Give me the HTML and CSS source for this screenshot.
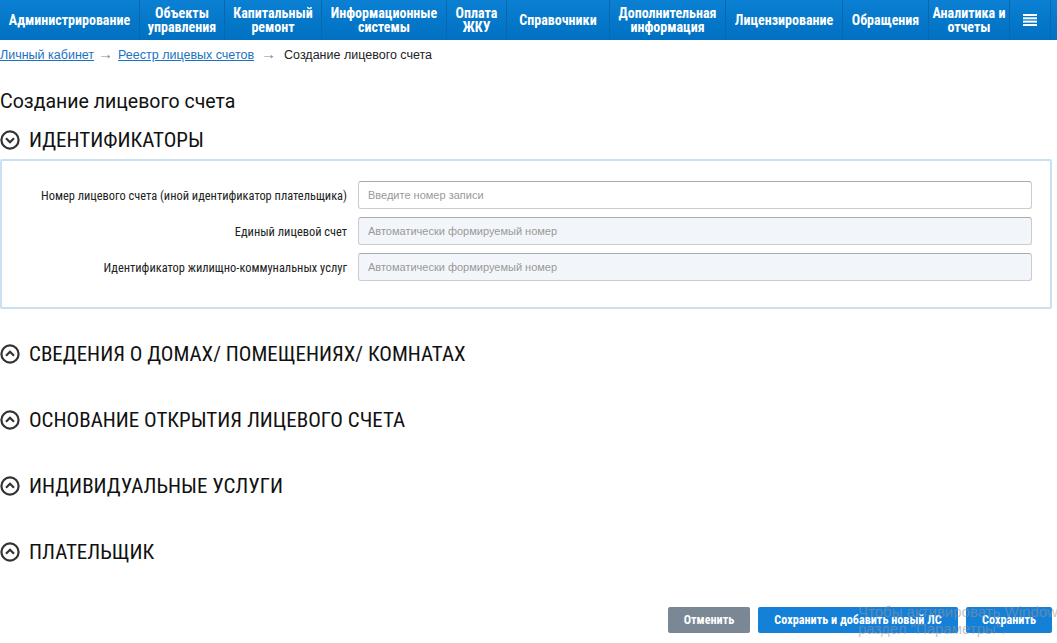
FILE: index.html
```html
<!DOCTYPE html>
<html lang="ru">
<head>
<meta charset="utf-8">
<title>Создание лицевого счета</title>
<link rel="stylesheet" href="styles.css">
</head>
<body>
<nav class="nav">
  <a class="nav-item w1">Администрирование</a>
  <a class="nav-item w2">Объекты<br>управления</a>
  <a class="nav-item w3">Капитальный<br>ремонт</a>
  <a class="nav-item w4">Информационные<br>системы</a>
  <a class="nav-item w5">Оплата<br>ЖКУ</a>
  <a class="nav-item w6">Справочники</a>
  <a class="nav-item w7">Дополнительная<br>информация</a>
  <a class="nav-item w8">Лицензирование</a>
  <a class="nav-item w9">Обращения</a>
  <a class="nav-item w10">Аналитика и<br>отчеты</a>
  <a class="nav-item nav-menu"><svg width="14" height="12" viewBox="0 0 14 12"><rect y="0" width="14" height="2" fill="#fff"/><rect y="3.3" width="14" height="2" fill="#fff"/><rect y="6.6" width="14" height="2" fill="#fff"/><rect y="10" width="14" height="2" fill="#fff"/></svg></a>
  <span class="nav-rest"></span>
</nav>

<div class="crumbs">
  <a class="crumb-link">Личный кабинет</a><span class="arrow">→</span><a class="crumb-link">Реестр лицевых счетов</a><span class="arrow arrow-last">→</span><span class="crumb-current">Создание лицевого счета</span>
</div>

<h1 class="title">Создание лицевого счета</h1>

<section class="section open">
  <h2 class="sec-head"><svg class="sec-icon" width="20" height="20" viewBox="0 0 20 20"><circle cx="10" cy="10" r="8.6" fill="none" stroke="#333" stroke-width="2.2"/><path d="M6 8.3 L10 12.2 L14 8.3" fill="none" stroke="#333" stroke-width="2.2"/></svg>ИДЕНТИФИКАТОРЫ</h2>
  <div class="box">
    <div class="row">
      <label class="label">Номер лицевого счета (иной идентификатор плательщика)</label>
      <input class="field" type="text" placeholder="Введите номер записи">
    </div>
    <div class="row">
      <label class="label">Единый лицевой счет</label>
      <input class="field ro" type="text" placeholder="Автоматически формируемый номер" readonly>
    </div>
    <div class="row">
      <label class="label">Идентификатор жилищно-коммунальных услуг</label>
      <input class="field ro" type="text" placeholder="Автоматически формируемый номер" readonly>
    </div>
  </div>
</section>

<section class="section">
  <h2 class="sec-head"><svg class="sec-icon" width="20" height="20" viewBox="0 0 20 20"><circle cx="10" cy="10" r="8.6" fill="none" stroke="#333" stroke-width="2.2"/><path d="M6 11.7 L10 7.8 L14 11.7" fill="none" stroke="#333" stroke-width="2.2"/></svg>СВЕДЕНИЯ О ДОМАХ/ ПОМЕЩЕНИЯХ/ КОМНАТАХ</h2>
</section>
<section class="section">
  <h2 class="sec-head"><svg class="sec-icon" width="20" height="20" viewBox="0 0 20 20"><circle cx="10" cy="10" r="8.6" fill="none" stroke="#333" stroke-width="2.2"/><path d="M6 11.7 L10 7.8 L14 11.7" fill="none" stroke="#333" stroke-width="2.2"/></svg>ОСНОВАНИЕ ОТКРЫТИЯ ЛИЦЕВОГО СЧЕТА</h2>
</section>
<section class="section">
  <h2 class="sec-head"><svg class="sec-icon" width="20" height="20" viewBox="0 0 20 20"><circle cx="10" cy="10" r="8.6" fill="none" stroke="#333" stroke-width="2.2"/><path d="M6 11.7 L10 7.8 L14 11.7" fill="none" stroke="#333" stroke-width="2.2"/></svg>ИНДИВИДУАЛЬНЫЕ УСЛУГИ</h2>
</section>
<section class="section">
  <h2 class="sec-head"><svg class="sec-icon" width="20" height="20" viewBox="0 0 20 20"><circle cx="10" cy="10" r="8.6" fill="none" stroke="#333" stroke-width="2.2"/><path d="M6 11.7 L10 7.8 L14 11.7" fill="none" stroke="#333" stroke-width="2.2"/></svg>ПЛАТЕЛЬЩИК</h2>
</section>

<div class="actions">
  <button class="btn btn-grey">Отменить</button>
  <button class="btn btn-blue btn-mid">Сохранить и добавить новый ЛС</button>
  <button class="btn btn-blue btn-last">Сохранить</button>
</div>

<div class="watermark">Чтобы активировать Windows<br>раздел "Параметры".</div>
</body>
</html>
```

FILE: styles.css
```css
html, body {
  margin: 0;
  padding: 0;
  background: #fff;
}
body {
  font-family: Roboto, "Noto Sans", sans-serif;
  font-stretch: 80%;
  color: #111;
  width: 1057px;
  height: 643px;
  overflow: hidden;
  position: relative;
}

/* nav */
.nav {
  display: flex;
  height: 40px;
  background: linear-gradient(#0b80d2, #0070c2);
}
.nav-item {
  display: flex;
  align-items: center;
  justify-content: center;
  text-align: center;
  color: #fff;
  font-weight: bold;
  font-size: 14px;
  line-height: 14px;
  white-space: nowrap;
  border-right: 1px solid #0a66ad;
  box-sizing: border-box;
  flex: none;
}
.w1 { width: 140px; }
.w2 { width: 85px; }
.w3 { width: 97px; }
.w4 { width: 125px; }
.w5 { width: 60px; }
.w6 { width: 103px; }
.w7 { width: 116px; }
.w8 { width: 117px; }
.w9 { width: 86px; }
.w10 { width: 81px; }
.nav-menu { width: 41px; }
.nav-rest { flex: 1; }

/* breadcrumbs */
.crumbs {
  padding-top: 7px;
  height: 21px;
  font-family: "Liberation Sans", Arial, sans-serif;
  font-stretch: normal;
  font-size: 12.5px;
  line-height: 14px;
  color: #222;
}
.crumb-link {
  color: #1a73c2;
  text-decoration: underline;
}
.arrow {
  display: inline-block;
  color: #888;
  font-size: 15px;
  margin: 0 5px 0 4px;
}
.arrow-last {
  margin: 0 8px 0 7px;
}

.title {
  margin: 22px 0 0;
  font-size: 19.5px;
  font-stretch: 94%;
  font-weight: normal;
  line-height: 24px;
  color: #111;
}

.section {
  margin: 0;
}
.sec-head {
  display: flex;
  align-items: center;
  gap: 9px;
  margin: 0;
  height: 32px;
  font-size: 21px;
  font-weight: normal;
  color: #111;
}
.sec-icon { flex: none; }
.section.open .sec-head { margin-top: 10px; }
.section + .section .sec-head { margin-top: 34px; }
.section.open + .section .sec-head { margin-top: 29px; }

.box {
  margin-top: 3px;
  width: 1052px;
  box-sizing: border-box;
  border: 2px solid #c8e0f0;
  border-radius: 2px;
  padding: 20px 18px 26px 0;
  display: flex;
  flex-direction: column;
  gap: 8px;
}
.row {
  display: flex;
  align-items: center;
}
.label {
  width: 345px;
  text-align: right;
  font-size: 12.4px;
  color: #222;
  white-space: nowrap;
  flex: none;
}
.field {
  margin-left: 11px;
  flex: 1;
  height: 28px;
  box-sizing: border-box;
  border: 1px solid #ccc;
  border-top-color: #aaa;
  border-radius: 3px;
  padding: 0 9px;
  font-family: "Liberation Sans", Arial, sans-serif;
  font-stretch: normal;
  font-size: 11px;
  background: #fff;
  outline: none;
}
.field.ro {
  background: #f2f6fa;
}
.field::placeholder {
  color: #999;
}

.actions {
  position: absolute;
  right: 5px;
  top: 607px;
  display: flex;
  gap: 8px;
}
.btn {
  height: 26px;
  border: none;
  border-radius: 2px;
  color: #fff;
  font-family: inherit;
  font-stretch: inherit;
  font-weight: bold;
  font-size: 12.2px;
  padding: 0;
  white-space: nowrap;
  cursor: pointer;
}
.btn-grey { background: #7a8896; width: 82px; }
.btn-blue { background: #1580d8; }
.btn-mid { width: 200px; }
.btn-last { width: 86px; }

.watermark {
  position: absolute;
  left: 858px;
  top: 603px;
  font-family: "Liberation Sans", Arial, sans-serif;
  font-stretch: normal;
  font-size: 15px;
  line-height: 17px;
  color: rgba(150, 150, 150, 0.55);
  white-space: nowrap;
  pointer-events: none;
}
```
